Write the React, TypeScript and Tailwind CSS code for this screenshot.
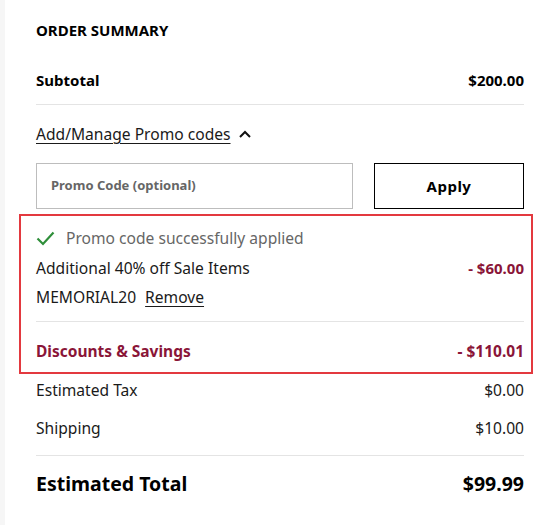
import React from "react";

const font = { fontFamily: "'Noto Sans', Lato, Arial, sans-serif" };

function Row({ label, value, className = "" }: { label: string; value: string; className?: string }) {
  return (
    <div className={`flex h-5 items-center justify-between leading-5 ${className}`}>
      <span>{label}</span>
      <span>{value}</span>
    </div>
  );
}

export default function App() {
  return (
    <div className="flex h-[525px] w-full bg-white text-[#1a1a1a]" style={font}>
      <div className="w-[5px] shrink-0 bg-[#f6f6f6]" />
      <div className="flex-1 pl-[31px] pr-[19px] pt-5">
        <h2 className="h-5 text-[15px] font-bold uppercase leading-5 text-black">Order Summary</h2>

        <div className="mt-[30px] border-b border-[#e4e4e4] pb-[14px]">
          <Row label="Subtotal" value="$200.00" className="text-[15px] font-bold text-black" />
        </div>

        <div className="mt-[19px] flex h-5 items-center gap-2 text-[15.6px] leading-5">
          <span className="underline underline-offset-[3px]">Add/Manage Promo codes</span>
          <svg width="12" height="8" viewBox="0 0 12 8" fill="none" stroke="#111" strokeWidth="2">
            <path d="M1 7l5-5 5 5" />
          </svg>
        </div>

        <div className="mt-[19px] flex h-[46px] gap-[21px]">
          <div className="flex flex-1 items-center border border-[#bdbdbd] px-[14px] text-[13px] font-bold text-[#666]">
            Promo Code (optional)
          </div>
          <button className="w-[150px] border border-black text-[15px] font-bold tracking-[0.5px] text-black">
            Apply
          </button>
        </div>

        <div className="ml-[-17px] mr-[-9px] mt-[5px] border-2 border-[#e3393f] pb-[11px] pl-[15px] pr-[7px] pt-3">
          <div className="flex h-5 items-center gap-[11px] text-[15.6px] leading-5 text-[#666]">
            <svg width="19" height="15" viewBox="0 0 19 15" fill="none" stroke="#2f8f3a" strokeWidth="2.2">
              <path d="M1.5 7.5l5.5 5.5L17.5 1.5" />
            </svg>
            <span>Promo code successfully applied</span>
          </div>
          <div className="mt-[10px] flex h-5 items-center justify-between text-[15.6px] leading-5">
            <span>Additional 40% off Sale Items</span>
            <span className="text-[15px] font-bold text-[#8a1538]">- $60.00</span>
          </div>
          <div className="mt-[9px] flex h-5 items-center gap-[9px] text-[15.6px] leading-5">
            <span>MEMORIAL20</span>
            <span className="underline underline-offset-[3px]">Remove</span>
          </div>
          <div className="mt-[14px] border-t border-[#e4e4e4]" />
          <Row label="Discounts & Savings" value="- $110.01" className="mt-[19px] text-[15.5px] font-bold text-[#8a1538]" />
        </div>

        <Row label="Estimated Tax" value="$0.00" className="mt-[6px] text-[15.6px]" />
        <div className="border-b border-[#e4e4e4] pb-[17px]">
          <Row label="Shipping" value="$10.00" className="mt-[18px] text-[15.6px]" />
        </div>
        <div className="mt-[14px] flex h-7 items-center justify-between text-[19.5px] font-bold leading-7 text-black">
          <span>Estimated Total</span>
          <span>$99.99</span>
        </div>
      </div>
    </div>
  );
}
